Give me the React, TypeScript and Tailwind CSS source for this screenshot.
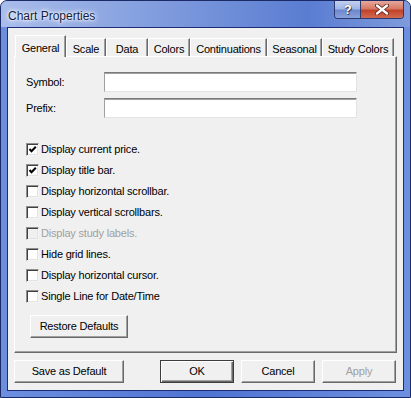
import React from "react";

const tabs = [
  { label: "General", w: "w-[51px]" },
  { label: "Scale", w: "w-[40px]" },
  { label: "Data", w: "w-[42px]" },
  { label: "Colors", w: "w-[42px]" },
  { label: "Continuations", w: "w-[77px]" },
  { label: "Seasonal", w: "w-[55px]" },
  { label: "Study Colors", w: "w-[72px]" },
];

const options = [
  { label: "Display current price.", checked: true },
  { label: "Display title bar.", checked: true },
  { label: "Display horizontal scrollbar." },
  { label: "Display vertical scrollbars." },
  { label: "Display study labels.", disabled: true },
  { label: "Hide grid lines." },
  { label: "Display horizontal cursor." },
  { label: "Single Line for Date/Time" },
];

function CheckBox({ checked, disabled }: { checked?: boolean; disabled?: boolean }) {
  return (
    <div
      className={`w-[13px] h-[13px] shrink-0 border border-t-[#8e8f8f] border-l-[#8e8f8f] border-r-[#f4f4f4] border-b-[#f4f4f4] shadow-[inset_1px_1px_0_#404040,inset_-1px_-1px_0_#e3e3e3] ${
        disabled ? "bg-[#f0f0f0]" : "bg-white"
      }`}
    >
      {checked && (
        <svg width="11" height="11" viewBox="0 0 11 11" className="block">
          <path d="M2.5 5 L4.5 7.2 L8.8 2.8" stroke="#000" strokeWidth="2" fill="none" />
        </svg>
      )}
    </div>
  );
}

function Button({ children, w, def, disabled }: { children: React.ReactNode; w: string; def?: boolean; disabled?: boolean }) {
  return (
    <div
      className={`${w} h-[23px] flex items-center justify-center bg-[#f0f0f0] border ${
        def
          ? "border-[#3c3c3c] shadow-[inset_1px_1px_0_#fff,inset_-1px_-1px_0_#696969,inset_-2px_-2px_0_#a0a0a0]"
          : "border-t-white border-l-white border-r-[#696969] border-b-[#696969] shadow-[inset_-1px_-1px_0_#a0a0a0]"
      } ${disabled ? "text-[#a0a0a0]" : "text-black"}`}
    >
      {children}
    </div>
  );
}

function TextBox() {
  return (
    <div className="w-[253px] h-[20px] bg-white border border-t-[#7a7a7a] border-l-[#a0a0a0] border-r-[#e3e3e3] border-b-[#e3e3e3] shadow-[inset_0_1px_0_#a0a0a0]" />
  );
}

export default function App() {
  return (
    <div className="w-[411px] h-[398px] bg-white">
      <div className="w-[411px] h-[398px] rounded-t-[7px] border border-[#1c2a66] bg-[linear-gradient(90deg,#6d8fe0_0%,#4f74d2_50%,#6d8fe0_100%)] flex flex-col relative font-['Liberation_Sans',Arial,sans-serif] text-[11px] tracking-[-0.2px] text-black">
        {/* title bar */}
        <div className="h-[26px] flex items-start pl-[7px] bg-[linear-gradient(90deg,#a9bdeb_0%,#8fa8e2_25%,#6f8ed8_55%,#5a7dd2_75%,#7f9bdc_100%)] rounded-t-[6px]">
          <span className="mt-[6px] text-[12px] tracking-normal text-[#15203c] [text-shadow:0_0_6px_#ffffff,0_0_4px_#ffffff,0_0_2px_#ffffff]">
            Chart Properties
          </span>
        </div>
        <div className="absolute top-0 right-[6px] flex h-[18px] rounded-b-[4px] border border-t-0 border-[#2c3a6e] overflow-hidden">
          <div className="w-[26px] h-full flex items-center justify-center bg-[linear-gradient(180deg,#c2d0f0_0%,#a3b6e6_45%,#6f87cc_55%,#8aa2dc_100%)] border-r border-[#2c3a6e]">
            <span className="text-white font-bold text-[13px] leading-none [text-shadow:0_0_1px_#233,1px_1px_0_#3a4878]">?</span>
          </div>
          <div className="w-[42px] h-full flex items-center justify-center bg-[linear-gradient(180deg,#e6a79b_0%,#d57a66_45%,#c2422a_55%,#d06a52_100%)]">
            <svg width="14" height="11" viewBox="0 0 14 11">
              <path d="M2 1.5 L12 9.5 M12 1.5 L2 9.5" stroke="#5a1a10" strokeWidth="4" strokeLinecap="round" />
              <path d="M2 1.5 L12 9.5 M12 1.5 L2 9.5" stroke="#fff" strokeWidth="2.4" strokeLinecap="round" />
            </svg>
          </div>
        </div>

        {/* client area */}
        <div className="mx-[6px] h-[364px] border border-[#1e2c78] bg-[#f0f0f0] pl-[6px] pt-[7px] flex flex-col">
          {/* tabs */}
          <div className="flex items-end h-[21px] ml-[1px]">
            {tabs.map((t, i) =>
              i === 0 ? (
                <div
                  key={t.label}
                  className={`${t.w} h-[22px] -mb-[1px] z-10 bg-[#f0f0f0] border-t border-l border-white border-r border-r-[#696969] shadow-[inset_-1px_0_0_#a0a0a0] flex items-start justify-center pt-[4px]`}
                >
                  {t.label}
                </div>
              ) : (
                <div
                  key={t.label}
                  className={`${t.w} h-[18px] bg-[#f0f0f0] border-t border-l border-white border-r border-r-[#696969] shadow-[inset_-1px_0_0_#a0a0a0] flex items-start justify-center pt-[2px]`}
                >
                  {t.label}
                </div>
              )
            )}
          </div>

          {/* panel */}
          <div className="w-[383px] h-[297px] border border-t-white border-l-white border-r-[#696969] border-b-[#696969] shadow-[inset_-1px_-1px_0_#a0a0a0] pl-[11px] pt-[15px] flex flex-col">
            <div className="flex items-center h-[20px]">
              <span className="w-[78px]">Symbol:</span>
              <TextBox />
            </div>
            <div className="flex items-center h-[20px] mt-[6px]">
              <span className="w-[78px]">Prefix:</span>
              <TextBox />
            </div>
            <div className="mt-[21px] flex flex-col">
              {options.map((o) => (
                <div key={o.label} className="h-[21px] flex items-center gap-[2px]">
                  <CheckBox checked={o.checked} disabled={o.disabled} />
                  <span className={o.disabled ? "text-[#a0a0a0]" : ""}>{o.label}</span>
                </div>
              ))}
            </div>
            <div className="mt-[8px] ml-[4px]">
              <Button w="w-[98px]">Restore Defaults</Button>
            </div>
          </div>

          {/* bottom buttons */}
          <div className="flex mt-[7px]">
            <Button w="w-[110px]">Save as Default</Button>
            <div className="ml-[36px] flex gap-[7px]">
              <Button w="w-[74px]" def>
                OK
              </Button>
              <Button w="w-[74px]">Cancel</Button>
              <Button w="w-[74px]" disabled>
                Apply
              </Button>
            </div>
          </div>
        </div>
      </div>
    </div>
  );
}
